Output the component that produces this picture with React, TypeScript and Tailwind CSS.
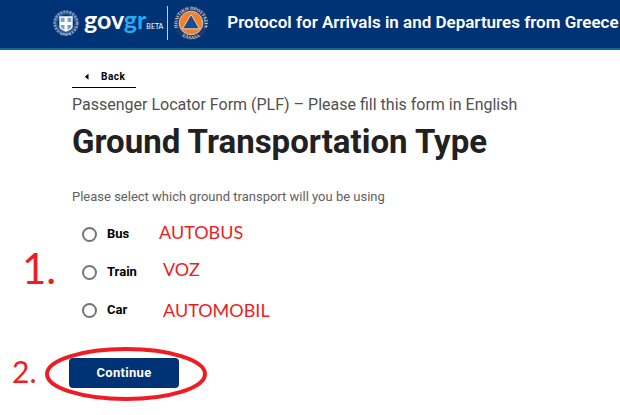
import { useState } from "react";

const options = [
  { value: "bus", label: "Bus", note: "AUTOBUS", noteClass: "left-[87px] -top-0.5" },
  { value: "train", label: "Train", note: "VOZ", noteClass: "left-[91px] -top-[3px]" },
  { value: "car", label: "Car", note: "AUTOMOBIL", noteClass: "left-[91px] top-0" },
];

const CoatOfArms = () => (
  <svg viewBox="0 0 26 28" className="h-7 w-[26px] shrink-0" aria-hidden="true">
    <circle cx="13" cy="14" r="11.2" fill="none" stroke="#7893bb" strokeWidth="3" strokeDasharray="2.4 .7" />
    <circle cx="13" cy="14" r="9.2" fill="none" stroke="#365f97" strokeWidth="1.200" />
    <path d="M8 26c2-1.500 3.500-1.500 5 0 1.500-1.500 3-1.500 5 0" fill="none" stroke="#8ea6c6" strokeWidth="1.300" />
    <path d="M7 8h12v9.500c0 2-1.500 3-6 4.500-4.500-1.500-6-2.500-6-4.500z" fill="#7d9fc9" />
    <path d="M11.500 8h3v5H19v3h-4.500v5.500L13 22l-1.500-.5V16H7v-3h4.500z" fill="#fff" />
    <path d="M7 8h12v9.500c0 2-1.500 3-6 4.500-4.500-1.500-6-2.500-6-4.500z" fill="none" stroke="#fff" strokeWidth="1.400" />
  </svg>
);

const CivilProtection = () => (
  <svg viewBox="0 0 36 36" className="size-9 shrink-0" aria-hidden="true">
    <defs>
      <path id="ring-top" d="M6.200 25.500A13.700 13.700 0 1 1 29.800 25.500" />
      <path id="ring-bottom" d="M7 29.700A16 16 0 0 0 29 29.700" />
    </defs>
    <circle cx="18" cy="18" r="17" fill="#1b3a69" />
    <circle cx="18" cy="18" r="11.800" fill="#f0822c" stroke="#d8dee8" strokeWidth="0.800" />
    <path d="M18 9.400 26.500 23.800h-17z" fill="#1b4b8f" stroke="#e5cdb8" strokeWidth="1" />
    <g fill="#e4dfd8" fontFamily="Liberation Serif, serif" fontWeight="700" fontSize="4.5">
      <text textAnchor="middle">
        <textPath href="#ring-top" startOffset="50%">ΠΟΛΙΤΙΚΗ ΠΡΟΣΤΑΣΙΑ</textPath>
      </text>
      <text textAnchor="middle">
        <textPath href="#ring-bottom" startOffset="50%">ΕΛΛΑΔΑ</textPath>
      </text>
    </g>
  </svg>
);

const App = () => {
  const [transport, setTransport] = useState("");

  return (
    <div className="min-h-screen bg-white font-['Roboto',sans-serif] text-black">
      <header className="flex h-[50px] items-center border-b-2 border-[#0f66a6] bg-[#003375] pl-[53px] pb-0.5">
        <CoatOfArms />
        <div className="flex shrink-0 items-baseline pb-2 pl-[5px] font-['Lato',sans-serif]">
          <span className="text-[25px] leading-8 font-bold text-white">
            gov<span className="text-[#27a9f0]">gr</span>
          </span>
          <span className="text-[7px] text-white">BETA</span>
        </div>
        <div className="ml-1 h-[34px] w-px shrink-0 bg-[#c3cddd]" />
        <div className="shrink-0 pl-[5px]">
          <CivilProtection />
        </div>
        <p className="pb-0.5 pl-[18px] text-[17px] leading-6 font-semibold whitespace-nowrap text-white">
          Protocol for Arrivals in and Departures from Greece
        </p>
      </header>

      <main className="grid grid-cols-[72px_1fr] pt-4">
        <div className="col-start-2">
          <a
            href="#back"
            className="flex h-[22px] w-16 items-center border-b border-black pl-3 text-[10px] font-bold tracking-wider"
          >
            <svg viewBox="0 0 5 8" className="mr-3 h-2 w-[5px]" aria-hidden="true">
              <path d="M4.500 0.800v6L0.800 3.800z" />
            </svg>
            Back
          </a>
          <p className="mt-[5px] text-[16px] leading-6 text-[#505050]">
            Passenger Locator Form (PLF) – Please fill this form in English
          </p>
          <h1 className="mt-[5px] text-[33px] leading-10 font-bold text-[#212121]">
            Ground Transportation Type
          </h1>
          <p id="question" className="mt-[25px] text-[13px] leading-5 text-[#606060]">
            Please select which ground transport will you be using
          </p>
        </div>

        <div className="flex items-center pl-[22px] font-['Lato',sans-serif] text-[42px] leading-10 text-[#ee1c24]">
          1.
        </div>
        <div role="radiogroup" aria-labelledby="question" className="mt-2">
          {options.map(({ value, label, note, noteClass }) => (
            <div key={value} className="relative flex h-[38px] items-center pl-2.5">
              <input
                type="radio"
                id={value}
                name="transport"
                value={value}
                checked={transport === value}
                onChange={() => setTransport(value)}
                className="size-[15px] appearance-none rounded-full border-2 border-[#757575] bg-white checked:border-4 checked:border-[#003375]"
              />
              <label htmlFor={value} className="pl-2.5 text-[13px] leading-5 font-bold">
                {label}
              </label>
              <span
                className={`absolute ${noteClass} font-['Lato',sans-serif] text-[18px] leading-[38px] text-[#ee1c24]`}
              >
                {note}
              </span>
            </div>
          ))}
        </div>

        <div className="mt-7 flex items-center pb-1 pl-3 font-['Lato',sans-serif] text-[30px] leading-6 text-[#ee1c24]">
          2.
        </div>
        <div className="relative mt-[29px] -ml-[3px]">
          <button
            type="button"
            className="block h-[30px] w-[110px] rounded-sm bg-[#003375] text-[13px] font-bold tracking-wide text-white"
          >
            Continue
          </button>
          <svg
            viewBox="0 0 162 54"
            className="pointer-events-none absolute -top-[11px] -left-6 h-[54px] w-[162px]"
            aria-hidden="true"
          >
            <ellipse cx="81" cy="27" rx="79" ry="25" fill="none" stroke="#ee1c24" strokeWidth="4" />
          </svg>
        </div>
      </main>
    </div>
  );
};

export default App;
